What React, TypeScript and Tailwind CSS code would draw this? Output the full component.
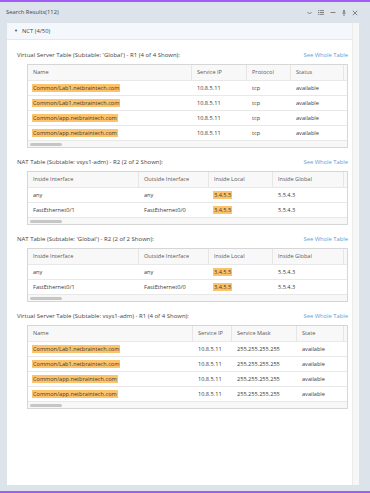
import React from "react";

type Cell = { text: string; hl?: boolean };
type TableSpec = {
  title: string;
  cols: { label: string; width: number }[];
  rows: Cell[][];
};

const font = { fontFamily: "'Open Sans', 'Noto Sans', sans-serif" };

const vsRows1: Cell[][] = [
  [{ text: "Common/Lab1.netbraintech.com", hl: true }, { text: "10.8.5.11" }, { text: "tcp" }, { text: "available" }],
  [{ text: "Common/Lab1.netbraintech.com", hl: true }, { text: "10.8.5.11" }, { text: "tcp" }, { text: "available" }],
  [{ text: "Common/app.netbraintech.com", hl: true }, { text: "10.8.5.11" }, { text: "tcp" }, { text: "available" }],
  [{ text: "Common/app.netbraintech.com", hl: true }, { text: "10.8.5.11" }, { text: "tcp" }, { text: "available" }],
];

const natRows: Cell[][] = [
  [{ text: "any" }, { text: "any" }, { text: "3.4.5.5", hl: true }, { text: "5.5.4.3" }],
  [{ text: "FastEthernet0/1" }, { text: "FastEthernet0/0" }, { text: "3.4.5.5", hl: true }, { text: "5.5.4.3" }],
];

const vsRows2: Cell[][] = [
  [{ text: "Common/Lab1.netbraintech.com", hl: true }, { text: "10.8.5.11" }, { text: "255.255.255.255" }, { text: "available" }],
  [{ text: "Common/Lab1.netbraintech.com", hl: true }, { text: "10.8.5.11" }, { text: "255.255.255.255" }, { text: "available" }],
  [{ text: "Common/app.netbraintech.com", hl: true }, { text: "10.8.5.11" }, { text: "255.255.255.255" }, { text: "available" }],
  [{ text: "Common/app.netbraintech.com", hl: true }, { text: "10.8.5.11" }, { text: "255.255.255.255" }, { text: "available" }],
];

const natCols = [
  { label: "Inside Interface", width: 111 },
  { label: "Outside Interface", width: 70 },
  { label: "Inside Local", width: 64 },
  { label: "Inside Global", width: 71 },
];

const tables: TableSpec[] = [
  {
    title: "Virtual Server Table (Subtable: 'Global') - R1 (4 of 4 Shown):",
    cols: [
      { label: "Name", width: 164 },
      { label: "Service IP", width: 55 },
      { label: "Protocol", width: 44 },
      { label: "Status", width: 53 },
    ],
    rows: vsRows1,
  },
  { title: "NAT Table (Subtable: vsys1-adm)  - R2 (2 of 2 Shown):", cols: natCols, rows: natRows },
  { title: "NAT Table (Subtable: 'Global')  - R2 (2 of 2 Shown):", cols: natCols, rows: natRows },
  {
    title: "Virtual Server Table (Subtable: vsys1-adm)  - R1 (4 of 4 Shown):",
    cols: [
      { label: "Name", width: 165 },
      { label: "Service IP", width: 39 },
      { label: "Service Mask", width: 65 },
      { label: "State", width: 47 },
    ],
    rows: vsRows2,
  },
];

const DataTable = ({ spec }: { spec: TableSpec }) => (
  <div className="flex flex-col gap-[4px]">
    <div className="flex h-[10px] items-center justify-between">
      <span className="text-[6px] text-[#3f3f3f]">{spec.title}</span>
      <span className="text-[5.8px] text-[#5aa0d8]">See Whole Table</span>
    </div>
    <div className="ml-[10px] border border-[#d6d6d6] bg-white">
      <div className="flex h-[15px] bg-[#f8f8f8]">
        {spec.cols.map((c) => (
          <div
            key={c.label}
            style={{ width: c.width }}
            className="flex shrink-0 items-center border-r border-[#e6e6e6] pl-[5px] text-[5.6px] text-[#5a5a5a]"
          >
            {c.label}
          </div>
        ))}
      </div>
      {spec.rows.map((r, i) => (
        <div key={i} className="flex h-[15px] border-t border-[#e8e8e8]">
          {r.map((cell, j) => (
            <div
              key={j}
              style={{ width: spec.cols[j].width }}
              className="flex shrink-0 items-center pl-[4px] text-[5.6px] text-[#3a3a3a]"
            >
              {cell.hl ? (
                <span className="bg-[#fdc36a] px-[1px] leading-[8px]">{cell.text}</span>
              ) : (
                <span className="pl-[1px]">{cell.text}</span>
              )}
            </div>
          ))}
        </div>
      ))}
      <div className="flex h-[7px] items-center border-t border-[#e8e8e8] bg-[#f7f7f7] pl-[2px]">
        <div className="h-[3px] w-[32px] rounded-full bg-[#c6c6c6]" />
      </div>
    </div>
  </div>
);

const Icons = () => (
  <div className="flex items-center gap-[6px] text-[#6b6b6b]">
    <svg width="5" height="4" viewBox="0 0 5 4" fill="none" stroke="currentColor" strokeWidth="0.8">
      <path d="M0.5 1 L2.5 3 L4.5 1" />
    </svg>
    <svg width="6" height="5" viewBox="0 0 6 5" fill="currentColor">
      <rect x="0" y="0.3" width="1" height="0.8" />
      <rect x="1.6" y="0.3" width="4.4" height="0.8" />
      <rect x="0" y="2.1" width="1" height="0.8" />
      <rect x="1.6" y="2.1" width="4.4" height="0.8" />
      <rect x="0" y="3.9" width="1" height="0.8" />
      <rect x="1.6" y="3.9" width="4.4" height="0.8" />
    </svg>
    <svg width="6" height="5" viewBox="0 0 6 5" fill="currentColor">
      <rect x="0.5" y="2.1" width="5" height="0.8" />
    </svg>
    <svg width="4" height="6" viewBox="0 0 4 6" fill="currentColor">
      <rect x="1" y="0" width="2" height="0.7" />
      <rect x="1.3" y="0.7" width="1.4" height="2" />
      <rect x="0.3" y="2.7" width="3.4" height="0.8" />
      <rect x="1.6" y="3.5" width="0.8" height="2.5" />
    </svg>
    <svg width="6" height="6" viewBox="0 0 6 6" fill="none" stroke="currentColor" strokeWidth="0.8">
      <path d="M0.8 0.8 L5.2 5.2 M5.2 0.8 L0.8 5.2" />
    </svg>
  </div>
);

export default function App() {
  return (
    <div
      style={font}
      className="flex h-[493px] w-[370px] flex-col border-t-2 border-b-2 border-[#a05cf5] bg-[#dde3ea]"
    >
      <div className="flex h-[21px] shrink-0 items-center justify-between pl-[6px] pr-[12px]">
        <span className="text-[5.8px] text-[#444]">Search Results(112)</span>
        <Icons />
      </div>
      <div className="mb-[6px] ml-[7px] mr-[11px] flex flex-1">
        <div className="flex flex-1 flex-col bg-white">
          <div className="flex h-[17px] shrink-0 items-center gap-[4px] border-b border-[#e2e8ee] bg-[#f4f8fc] pl-[7px] text-[5.8px] text-[#444]">
            <span className="text-[4px]">▼</span>
            <span>NCT (4/50)</span>
          </div>
          <div className="flex flex-col gap-[9px] pl-[10px] pr-[4px] pt-[10px]">
            {tables.map((t) => (
              <DataTable key={t.title} spec={t} />
            ))}
          </div>
        </div>
        <div className="w-[7px] border-l border-[#ececec] bg-[#f7f7f7]" />
      </div>
    </div>
  );
}
